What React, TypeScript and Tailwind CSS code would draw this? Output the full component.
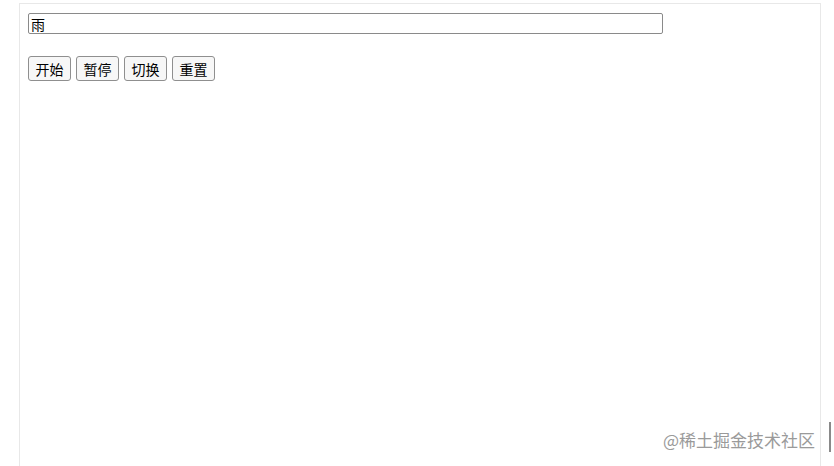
import React from "react";

export default function App() {
  const btn =
    "w-[43px] h-[25px] flex items-center justify-center border border-[#8f8f8f] rounded-[3px] bg-[#f7f7f7] text-[14px] leading-none text-black";
  return (
    <div
      className="relative w-[834px] h-[466px] bg-white overflow-hidden"
      style={{ fontFamily: '"Noto Sans CJK SC", "Liberation Sans", sans-serif' }}
    >
      <div className="ml-[19px] mt-[3px] w-[802px] h-[470px] border border-[#e8e8e8] pl-[8px] pt-[9px]">
        <input
          defaultValue="雨"
          className="block w-[635px] h-[21px] border border-[#8a8a8a] rounded-[2px] px-[2px] text-[14px] leading-none text-black outline-none"
        />
        <div className="mt-[22px] flex gap-[5px]">
          <button className={btn}>开始</button>
          <button className={btn}>暂停</button>
          <button className={btn}>切换</button>
          <button className={btn}>重置</button>
        </div>
      </div>
      <div
        className="absolute left-[663px] top-[431px] text-[17px] leading-none text-[#9a9a9a] whitespace-nowrap"
        style={{ textShadow: "0 0 1px #fff" }}
      >
        @稀土掘金技术社区
      </div>
      <div className="absolute left-[829px] top-[422px] w-[2px] h-[30px] bg-[#8a8a8a]" />
    </div>
  );
}
